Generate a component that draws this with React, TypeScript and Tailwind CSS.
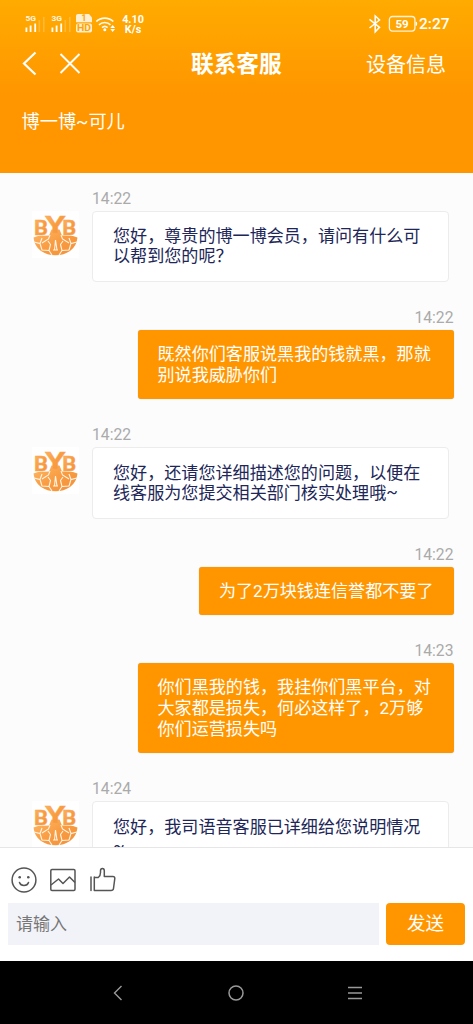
import React from 'react';

type Message = { time: string; mine?: boolean; lines: string[] };

const messages: Message[] = [
  { time: '14:22', lines: ['您好，尊贵的博一博会员，请问有什么可', '以帮到您的呢？'] },
  { time: '14:22', mine: true, lines: ['既然你们客服说黑我的钱就黑，那就', '别说我威胁你们'] },
  { time: '14:22', lines: ['您好，还请您详细描述您的问题，以便在', '线客服为您提交相关部门核实处理哦~'] },
  { time: '14:22', mine: true, lines: ['为了2万块钱连信誉都不要了'] },
  { time: '14:23', mine: true, lines: ['你们黑我的钱，我挂你们黑平台，对', '大家都是损失，何必这样了，2万够', '你们运营损失吗'] },
  { time: '14:24', lines: ['您好，我司语音客服已详细给您说明情况', '~'] },
];

function Signal({ label }: { label: string }) {
  return (
    <svg width="20" height="20" viewBox="0 0 20 20" fill="#fff">
      <text x="0.5" y="7.5" fontSize="7.5" fontWeight="700" textLength="10.5" lengthAdjust="spacingAndGlyphs" fillOpacity=".9">{label}</text>
      <rect x="0.5" y="14.5" width="1.8" height="4.5" />
      <rect x="4.7" y="12.5" width="1.8" height="6.5" />
      <rect x="9.3" y="10.5" width="1.8" height="8.5" />
      <rect x="13.5" y="7" width="1.6" height="12" opacity=".22" />
      <rect x="18" y="4" width="1.6" height="15" opacity=".22" />
    </svg>
  );
}

function StatusBar() {
  return (
    <div className="flex h-[46px] items-start pl-[25px] pr-[23px] pt-[13px] text-white">
      <Signal label="5G" />
      <div className="w-[6px]" />
      <Signal label="3G" />
      <svg className="ml-[4px]" width="18" height="20" viewBox="0 0 18 20">
        <path d="M3 1h11l3 3.5v4.800H1V3q0-2 2-2z" fill="#fff" fillOpacity=".82" />
        <rect x="1" y="10.5" width="16" height="9" rx="2" fill="#fff" fillOpacity=".82" />
        <text x="6.6" y="8.2" fontSize="8.5" fontWeight="700" fill="#ffa300">1</text>
        <text x="2" y="18.1" fontSize="9" fontWeight="700" textLength="14" lengthAdjust="spacingAndGlyphs" fill="#ffa300">HD</text>
      </svg>
      <svg className="ml-[2px]" width="21" height="20" viewBox="0 0 21 20" fill="none" stroke="#fff" strokeWidth="1.7" strokeOpacity=".95">
        <path d="M1.3 8.5a12.3 12.3 0 0 1 17 0M4 11.8a8.3 8.3 0 0 1 11.5 0M7 14.7a4.2 4.2 0 0 1 5.6 0" />
        <circle cx="9.8" cy="16.8" r="1.5" fill="#fff" stroke="none" />
        <path d="m17.7 12 2.4 3h-4.8zm0 7 2.4-3h-4.8z" fill="#fff" stroke="none" />
      </svg>
      <div className="ml-[5px] mt-[2px] w-[24px] text-center text-[10.8px] font-bold leading-[10px]">
        <div>4.10</div>
        <div>K/s</div>
      </div>
      <div className="flex-1" />
      <svg width="14" height="20" viewBox="0 0 14 20" fill="none" stroke="#fff" strokeWidth="1.5" className="mr-px mt-px">
        <path d="m1.5 5.3 10 8-4.300 4.500V2l4.300 4-10 8" />
      </svg>
      <svg width="30" height="18" viewBox="0 0 30 18" className="ml-[5px] mt-[2px]">
        <rect x="1.4" y="1.5" width="25.5" height="14.6" rx="3" fill="none" stroke="#fff" strokeOpacity=".85" strokeWidth="1.3" />
        <path d="M27.6 6.5q1.6 0 1.6 2.3t-1.6 2.3z" fill="#fff" />
        <text x="14" y="12.8" textAnchor="middle" fontSize="11.5" fontWeight="700" fill="#fff">59</text>
      </svg>
      <span className="ml-[1px] w-[31px] whitespace-nowrap text-[15.5px] font-medium leading-[23px]">2:27</span>
    </div>
  );
}

function Avatar() {
  return (
    <div className="mt-[24px] h-[47px] w-[47px] shrink-0 bg-white">
      <svg width="47" height="47" viewBox="0 0 47 47">
        <defs>
          <linearGradient id="amber" x1="0" y1="0" x2="1" y2="1">
            <stop offset="0" stopColor="#fdb866" />
            <stop offset=".5" stopColor="#f99c42" />
            <stop offset="1" stopColor="#f39038" />
          </linearGradient>
        </defs>
        <path d="M1.500 26.500 6 25l11-.5 2.500-6h8l2.500 6 11 .5 4.500 1.500Q44.500 35.500 38 40q-6 4.200-14.500 4.200T9 40Q2.500 35.500 1.500 26.500z" fill="url(#amber)" />
        <path d="M2 31l6 1.500 2-5.500M8 32.500l2 6.500 7 .5M10 32l6.500-4 1.500-4M16 30l2.500 3.500L17 39.500l3 4.500M45 31l-6 1.500-2-5.500M39 32.500 37 39l-7 .5M37 32l-6.500-4-1.500-4M31 30l-2.500 3.500 1.500 6-3 4.500M21 39h5M23.500 29l-1 10M23.500 29l1.500 10" fill="none" stroke="#fff4e6" strokeWidth="1.1" />
        <g fill="url(#amber)" fontWeight="700" stroke="#f9a550" strokeWidth=".4">
          <text x="2" y="23.8" fontSize="20.5" textLength="14" lengthAdjust="spacingAndGlyphs">B</text>
          <text x="30.2" y="23.8" fontSize="20.5" textLength="14" lengthAdjust="spacingAndGlyphs">B</text>
          <text x="13" y="22" fontSize="24.5" textLength="20.5" lengthAdjust="spacingAndGlyphs">Y</text>
        </g>
      </svg>
    </div>
  );
}

function Line({ text }: { text: string }) {
  const hasTilde = text.endsWith('~');
  return (
    <div className="h-[20.7px] whitespace-nowrap text-[17.08px] leading-[20.7px]">
      {hasTilde ? text.slice(0, -1) : text}
      {hasTilde && <span className="relative -top-[1.5px]">~</span>}
    </div>
  );
}

function Row({ message }: { message: Message }) {
  const { mine, time, lines } = message;
  return (
    <div className={mine ? 'mb-[24px] flex justify-end pr-[19.5px]' : 'mb-[24px] flex gap-[13px] pl-[32px]'}>
      {!mine && <Avatar />}
      <div className={mine ? (lines.length > 1 ? 'w-[316px] text-right' : 'text-right') : 'w-[357px]'}>
        <div className="h-[24px] text-[15.7px] leading-[24px] text-[#aaa]">{time}</div>
        <div
          className={
            mine
              ? 'rounded-[3px] bg-[#ff9600] py-[14px] pl-[20px] pr-[20px] text-left text-white shadow-[0_0_1px_#bbb]'
              : 'rounded-[4px] border border-[#ececec] bg-white px-[20px] pb-[13.7px] pt-[14.3px] text-[#202657]'
          }
        >
          {lines.map((line) => (
            <Line key={line} text={line} />
          ))}
        </div>
      </div>
    </div>
  );
}

export default function App() {
  return (
    <div lang="zh-CN" className="flex h-[1024px] w-[473px] flex-col overflow-hidden bg-[#fcfcfc] font-[Roboto,'Noto_Sans_CJK_SC',sans-serif]">
      <header className="h-[173px] shrink-0 bg-[linear-gradient(#ffab00_0,#ff9600_95px)] text-white">
        <StatusBar />
        <div className="flex h-[36px] items-center pl-[22px] pr-[27px]">
          <svg width="15" height="26" viewBox="0 0 15 26" fill="none" stroke="#fff" strokeWidth="2.2">
            <path d="M13.5 1.5 2 12.5l11.5 11" />
          </svg>
          <svg className="ml-[22px]" width="22" height="22" viewBox="0 0 22 22" fill="none" stroke="#fff" strokeWidth="1.9">
            <path d="m1.5 1 19 19m0-19-19 19" />
          </svg>
          <h1 className="ml-[110px] pt-[2px] text-[22.7px] font-bold leading-[34px]">联系客服</h1>
          <span className="ml-auto pt-[2px] text-[20px] leading-[34px]">设备信息</span>
        </div>
        <div className="pl-[21.5px] pt-[25px] text-[18.2px] leading-[30px]">博一博~可儿</div>
      </header>

      <main className="min-h-0 flex-1 overflow-hidden pt-[13.5px]">
        {messages.map((m, i) => (
          <Row key={i} message={m} />
        ))}
      </main>

      <footer className="h-[114px] shrink-0 border-t border-[#e6e6e6] bg-white">
        <div className="flex h-[55px] items-center gap-[14px] pl-[10.5px] pt-[9px]">
          <svg width="26" height="26" viewBox="0 0 26 26" fill="none" stroke="#555" strokeWidth="1.5">
            <circle cx="13" cy="13" r="11.9" />
            <path d="M8.5 15.5q1 3 4.5 3t4.500-3" strokeLinecap="round" />
            <circle cx="8.7" cy="10.2" r="1.3" fill="#555" stroke="none" />
            <circle cx="17.3" cy="10.2" r="1.3" fill="#555" stroke="none" />
          </svg>
          <svg className="-ml-px" width="26" height="26" viewBox="0 0 26 26" fill="none" stroke="#555" strokeWidth="1.5" strokeLinejoin="round">
            <rect x=".8" y="2.5" width="24.2" height="21" rx="1.2" />
            <path d="m1 18 7.5-6 4.5 4.500 6.500-6.500 5.500 5.500" />
          </svg>
          <svg width="26" height="26" viewBox="0 0 26 26" fill="none" stroke="#555" strokeWidth="1.5" strokeLinejoin="round" strokeLinecap="round">
            <path d="M1 10v13.500M4.300 10v13.500M4.300 10.500h4q2.200-1.500 2.200-5V3.800q0-2.300 1.900-2.300t1.900 2.300v5.700h8.500q2.200 0 2 2l-1.300 10q-.3 2-2.500 2H4.300" />
          </svg>
        </div>
        <div className="flex gap-[7px] px-[8px]">
          <div className="h-[42px] w-[371px] bg-[#f2f3f8] pl-[8px] text-[17px] leading-[42px] text-[#777]">请输入</div>
          <button className="h-[42px] w-[79px] rounded-[4px] bg-[#ff9600] text-[18.5px] leading-[42px] text-white">发送</button>
        </div>
      </footer>

      <nav className="flex h-[63px] shrink-0 items-center justify-between bg-black pl-[113px] pr-[111px]">
        <svg width="10" height="16" viewBox="0 0 10 16" fill="none" stroke="#999" strokeWidth="1.4">
          <path d="M8.5 1 1.500 8l7 7" />
        </svg>
        <svg width="16" height="16" viewBox="0 0 16 16" fill="none" stroke="#999" strokeWidth="1.5">
          <circle cx="8" cy="8" r="7" />
        </svg>
        <svg width="14" height="16" viewBox="0 0 14 16" fill="none" stroke="#999" strokeWidth="1.5">
          <path d="M0 2.500h14M0 8h14M0 13.500h14" />
        </svg>
      </nav>
    </div>
  );
}
